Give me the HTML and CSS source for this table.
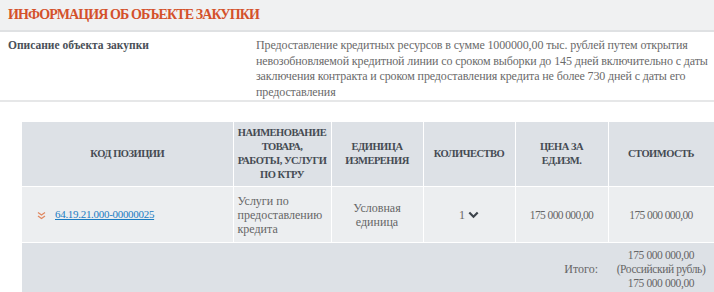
FILE: index.html
```html
<!DOCTYPE html>
<html lang="ru">
<head>
<meta charset="utf-8">
<link rel="stylesheet" href="styles.css">
</head>
<body>
<div class="section-head"><h2 class="section-title">Информация об объекте закупки</h2></div>
<div class="desc-row">
  <div class="desc-label">Описание объекта закупки</div>
  <div class="desc-value">Предоставление кредитных ресурсов в сумме 1000000,00 тыс. рублей путем открытия невозобновляемой кредитной линии со сроком выборки до 145 дней включительно с даты заключения контракта и сроком предоставления кредита не более 730 дней с даты его предоставления</div>
</div>
<div class="table-wrap">
<table class="pos-table">
  <colgroup>
    <col class="c1"><col class="c2"><col class="c3"><col class="c4"><col class="c5"><col class="c6">
  </colgroup>
  <thead>
    <tr>
      <th>Код позиции</th>
      <th>Наименование товара,<br>работы, услуги по КТРУ</th>
      <th>Единица измерения</th>
      <th>Количество</th>
      <th>Цена за<br>ед.изм.</th>
      <th>Стоимость</th>
    </tr>
  </thead>
  <tbody>
    <tr class="item-row">
      <td class="code-cell"><span class="expand"><svg width="9" height="9" viewBox="0 0 9 9"><path d="M1 1.5 L4.5 4 L8 1.5 M1 5 L4.5 7.5 L8 5" fill="none" stroke="#e0875f" stroke-width="1.3"/></svg></span><a href="#" class="code-link">64.19.21.000-00000025</a></td>
      <td class="left">Услуги по предоставлению кредита</td>
      <td>Условная единица</td>
      <td><span class="qty">1</span><svg class="qty-arrow" width="11" height="8" viewBox="0 0 11 8"><path d="M1.3 1.5 L5.5 5.7 L9.7 1.5" fill="none" stroke="#3c434b" stroke-width="2.2"/></svg></td>
      <td class="num">175 000 000,00</td>
      <td class="num">175 000 000,00</td>
    </tr>
    <tr class="total-row">
      <td></td><td></td><td></td><td></td>
      <td class="total-label">Итого:</td>
      <td class="total-value">175 000 000,00<br>(Российский рубль)<br>175 000 000,00</td>
    </tr>
  </tbody>
</table>
</div>
</body>
</html>
```
FILE: styles.css
```css
html, body {
  margin: 0;
  padding: 0;
  background: #fff;
  overflow: hidden;
}
body {
  font-family: "Liberation Serif", "Noto Serif", serif;
  color: #666;
  width: 714px;
}
.section-head {
  background: #f0f1f2;
  border-bottom: 2px solid #dfe1e3;
  height: 30px;
  display: flex;
  align-items: center;
  padding-left: 8px;
}
.section-title {
  margin: 0;
  font-size: 14px;
  font-weight: bold;
  text-transform: uppercase;
  color: #d4512b;
  letter-spacing: -0.9px;
}
.desc-row {
  display: flex;
  padding: 6px 0 0 8px;
  border-bottom: 2px solid #e6e7e8;
}
.desc-label {
  width: 248px;
  flex: none;
  font-size: 11.5px;
  font-weight: bold;
  color: #4a5058;
  line-height: 15.6px;
}
.desc-value {
  width: 456px;
  font-size: 12px;
  line-height: 15.6px;
  letter-spacing: -0.12px;
  color: #6a6a6a;
}
.table-wrap {
  padding: 20px 0 0 22px;
}
.pos-table {
  border-collapse: collapse;
  table-layout: fixed;
  width: 692px;
  font-size: 12px;
}
.c1 { width: 211px; }
.c2 { width: 98px; }
.c3 { width: 92px; }
.c4 { width: 92px; }
.c5 { width: 93px; }
.c6 { width: 106px; }
.pos-table th {
  background: #dde1e6;
  color: #454b53;
  font-size: 10.5px;
  font-weight: bold;
  text-transform: uppercase;
  line-height: 14px;
  letter-spacing: -0.5px;
  border: 1px solid #fff;
  border-top: none;
  height: 64px;
  padding: 0 3px;
}
.pos-table th:first-child { border-left: none; }
.pos-table td {
  border: 1px solid #fff;
  text-align: center;
  line-height: 14px;
  padding: 0 4px;
  color: #666;
}
.pos-table td:first-child { border-left: none; }
.pos-table td.num { font-size: 11.5px; letter-spacing: -0.6px; }
.item-row td {
  background: #eceef0;
  height: 55px;
}
.item-row td.left { text-align: left; }
.code-cell {
  text-align: left !important;
  padding-left: 15px !important;
}
.expand {
  display: inline-block;
  width: 18px;
  vertical-align: middle;
}
.code-link {
  color: #1b7cc2;
  text-decoration: underline;
  font-size: 11px;
  letter-spacing: -0.3px;
}
.qty { color: #666; }
.qty-arrow { margin-left: 3px; vertical-align: 0; }
.total-row td {
  background: #dde1e6;
  height: 48px;
  padding-top: 5px;
  vertical-align: top;
  border-left: none;
  border-right: none;
  border-bottom: none;
}
.total-row td.total-label {
  text-align: right;
  padding-top: 19px;
  padding-right: 10px;
}
.total-row td.total-value {
  padding-left: 0;
  padding-right: 0;
  white-space: nowrap;
  font-size: 11.5px;
  letter-spacing: -0.4px;
}
```
